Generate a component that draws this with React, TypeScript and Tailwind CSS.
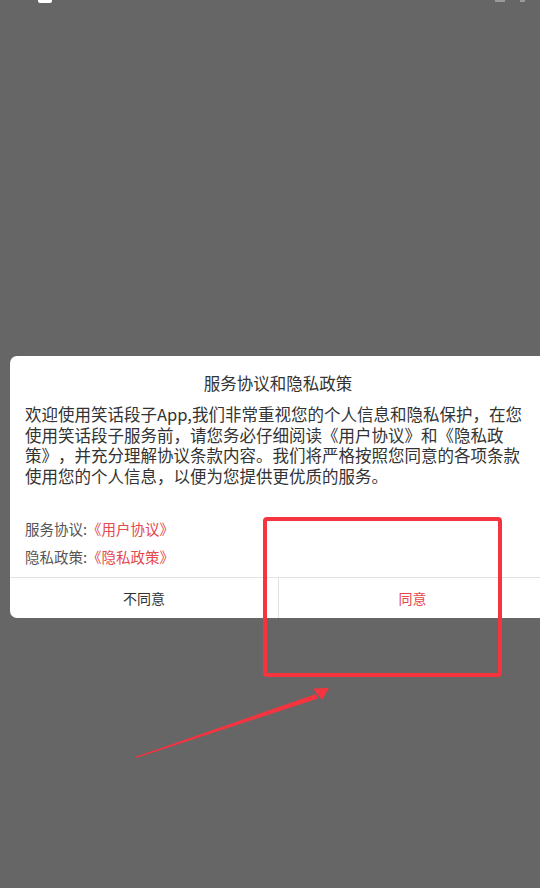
import React from "react";

const FONT = { fontFamily: '"Noto Sans CJK SC", "Noto Sans", sans-serif' };

function PrivacyDialog() {
  return (
    <div className="ml-[10px] w-[536px] shrink-0 overflow-hidden rounded-[7px] bg-white [text-spacing-trim:space-all]">
      <h2 className="pt-[16px] text-center text-[16.5px] leading-[22px] font-normal text-[#333333]">
        服务协议和隐私政策
      </h2>
      <p className="mt-[10px] px-[15px] text-[16.5px] leading-[20.5px] text-[#333333]">
        欢迎使用笑话段子App,我们非常重视您的个人信息和隐私保护，在您使用笑话段子服务前，请您务必仔细阅读《用户协议》和《隐私政策》，并充分理解协议条款内容。我们将严格按照您同意的各项条款使用您的个人信息，以便为您提供更优质的服务。
      </p>
      <div className="mt-[29px] px-[15px] pb-[6px] text-[14.5px] leading-[28px]">
        <div className="text-[#555555]">
          服务协议:<a href="#" className="text-[#e5484d]">《用户协议》</a>
        </div>
        <div className="text-[#555555]">
          隐私政策:<a href="#" className="text-[#e5484d]">《隐私政策》</a>
        </div>
      </div>
      <div className="flex h-[41px] border-t border-[#e2e2e2]">
        <button className="w-[268px] text-[14px] text-[#333333]">不同意</button>
        <button className="flex-1 border-l border-[#e2e2e2] text-[14px] text-[#e5484d]">同意</button>
      </div>
    </div>
  );
}

export default function App() {
  return (
    <div style={FONT} className="relative flex h-[888px] w-[540px] flex-col overflow-hidden bg-[#666666]">
      {/* status bar remnants */}
      <div className="absolute left-[38px] top-0 h-[3px] w-[14px] rounded-b-[2px] bg-white" />
      <div className="absolute left-[495px] top-0 h-[2px] w-[10px] bg-[#9a9a9a]" />
      <div className="absolute left-[520px] top-0 h-[2px] w-[5px] bg-[#9a9a9a]" />

      <div className="h-[356px] shrink-0" />
      <PrivacyDialog />

      {/* annotation: highlight box */}
      <div className="pointer-events-none absolute left-[263px] top-[517px] h-[160px] w-[239px] rounded-[4px] border-[4.5px] border-[#f4353f]" />

      {/* annotation: arrow */}
      <svg
        className="pointer-events-none absolute left-0 top-0"
        width="540"
        height="888"
        viewBox="0 0 540 888"
      >
        <polygon points="135,757 316,694 318,698.5 136,758" fill="#f4353f" />
        <polygon points="329,688 313,688.5 322,700" fill="#f4353f" />
      </svg>
    </div>
  );
}
